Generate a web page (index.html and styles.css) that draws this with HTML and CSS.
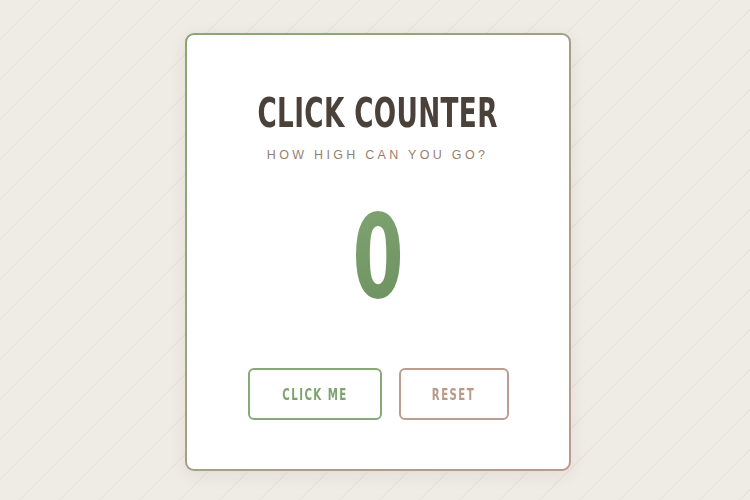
FILE: index.html
```html
<!DOCTYPE html>
<html lang="en">
<head>
<meta charset="utf-8">
<title>Click Counter</title>
<link rel="stylesheet" href="styles.css">
</head>
<body>
<main class="card">
  <h1 class="title"><span class="squeeze-title">CLICK COUNTER</span></h1>
  <p class="subtitle">HOW HIGH CAN YOU GO?</p>
  <div class="count"><span class="digits">0</span></div>
  <div class="actions">
    <button class="btn btn-click"><span class="squeeze-btn">CLICK ME</span></button>
    <button class="btn btn-reset"><span class="squeeze-btn">RESET</span></button>
  </div>
</main>
</body>
</html>
```
FILE: styles.css
```css
html, body {
  margin: 0;
  padding: 0;
  height: 100%;
}
body {
  background-color: #efebe5;
  background-image: repeating-linear-gradient(135deg, transparent 0 27px, #e8e3dc 27px 28.3px);
  display: flex;
  justify-content: center;
  align-items: flex-start;
  font-family: "Liberation Sans", Arial, sans-serif;
}
.card {
  box-sizing: border-box;
  width: 386px;
  height: 438px;
  margin: 33px 0 0 6px;
  padding: 54px 0 0;
  border: 2px solid transparent;
  border-radius: 9px;
  background:
    linear-gradient(#fff, #fff) padding-box,
    linear-gradient(135deg, #86a874 0%, #a3a183 50%, #bb9a8d 100%) border-box;
  box-shadow: 0 4px 18px rgba(90, 70, 50, 0.08);
  display: flex;
  flex-direction: column;
  align-items: center;
}
.title {
  margin: 0;
  font-family: "DejaVu Sans Condensed", "DejaVu Sans", sans-serif;
  font-weight: 700;
  font-size: 40px;
  line-height: 48px;
  color: #4a413a;
  white-space: nowrap;
}
.squeeze-title {
  display: inline-block;
  letter-spacing: 0.5px;
  transform: scaleX(0.73);
}
.subtitle {
  margin: 10px 0 0;
  font-size: 12.5px;
  line-height: 16px;
  letter-spacing: 3.3px;
  color: #977f70;
  padding-right: 1px;
}
.count {
  margin-top: 37px;
  height: 115px;
  font-family: "DejaVu Sans Condensed", "DejaVu Sans", sans-serif;
  font-weight: 700;
  font-size: 115px;
  line-height: 115px;
}
.digits {
  display: inline-block;
  background: linear-gradient(160deg, #80a472, #6b8f5e);
  -webkit-background-clip: text;
  background-clip: text;
  color: transparent;
  transform: scaleX(0.71);
}
.actions {
  margin-top: 53px;
  display: flex;
  gap: 17px;
}
.btn {
  box-sizing: border-box;
  height: 52px;
  background: #fff;
  border: 2px solid;
  border-radius: 6px;
  font-family: "DejaVu Sans Condensed", "DejaVu Sans", sans-serif;
  font-weight: 700;
  font-size: 16px;
  padding: 0;
  cursor: pointer;
}
.squeeze-btn {
  display: inline-block;
  letter-spacing: 2px;
  transform: scaleX(0.71);
}
.btn-click {
  width: 134px;
  border-color: #87a877;
  color: #7fa26f;
}
.btn-reset {
  width: 110px;
  border-color: #bd9d90;
  color: #b8998a;
}
```
